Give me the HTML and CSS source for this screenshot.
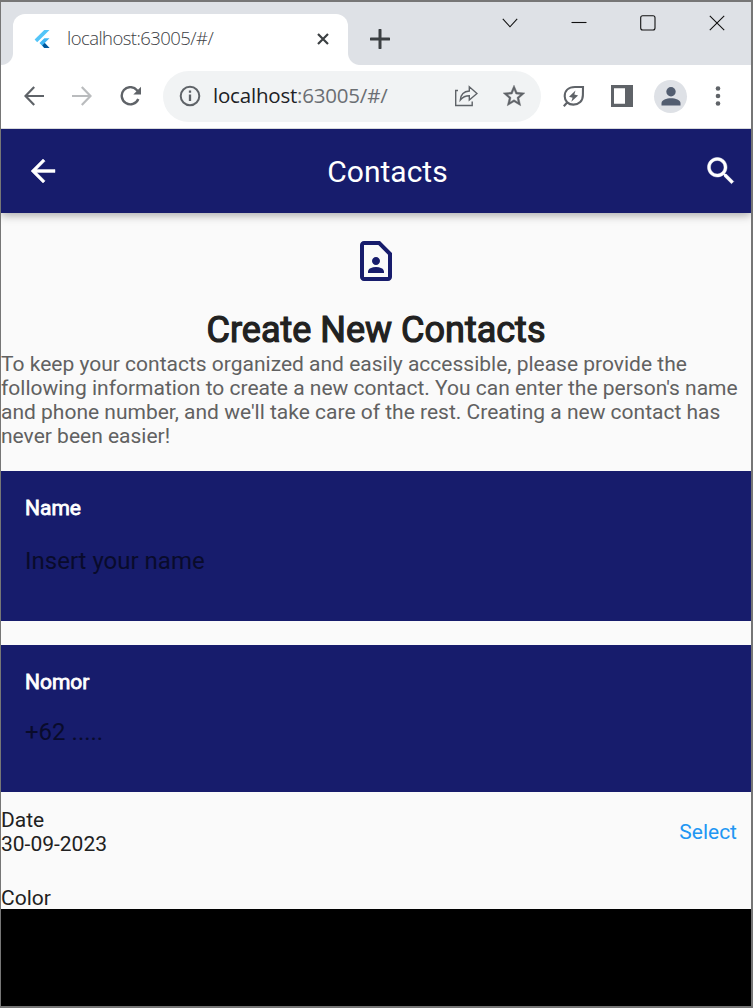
FILE: index.html
```html
<!DOCTYPE html>
<html lang="en">
<head>
<meta charset="utf-8">
<title>Contacts</title>
<link rel="stylesheet" href="styles.css">
</head>
<body>
<div class="window">
  <header class="tabstrip">
    <div class="tab">
      <svg class="favicon" width="24" height="24" viewBox="0 0 24 24"><path fill="#54c5f8" d="M14.300 3H19.500L7.200 15.200 4.600 12.600z"/><path fill="#40b6f3" d="M14.300 11.300H19.500L14.700 16l4.800 5h-5.200L9.500 16z"/><path fill="#01579b" d="M12.300 18.600l2.500-2.500 4.700 4.900h-5.200z"/></svg>
      <span class="tab-title">localhost:63005/#/</span>
      <svg class="tab-close" width="14" height="14" viewBox="0 0 14 14"><path d="M2 2l10 10M12 2L2 12" stroke="#3c4043" stroke-width="2.200" fill="none"/></svg>
    </div>
    <svg class="new-tab" width="20" height="20" viewBox="0 0 20 20"><path d="M10 1v18M1 10h18" stroke="#3c4043" stroke-width="3" stroke-linecap="round" fill="none"/></svg>
    <div class="controls">
      <svg width="16" height="16" viewBox="0 0 16 16"><path d="M.8 3.800L8 11.800l7.200-8"/></svg>
      <svg width="16" height="16" viewBox="0 0 16 16"><path d="M.5 7.500h15"/></svg>
      <svg width="16" height="16" viewBox="0 0 16 16"><rect x=".7" y=".7" width="14.300" height="14.300" rx="2"/></svg>
      <svg width="16" height="16" viewBox="0 0 16 16"><path d="M.8.8l14.400 14.400M15.200.8L.8 15.200"/></svg>
    </div>
  </header>
  <nav class="toolbar">
    <svg class="nav-icon" width="20" height="20" viewBox="0 0 20 20"><path d="M20 10H1.800M10.200 1L1.500 10l8.700 9" stroke="#5f6368" stroke-width="2.200" fill="none"/></svg>
    <svg class="nav-icon" width="20" height="20" viewBox="0 0 20 20"><path d="M0 10h18.200M9.800 1l8.700 9-8.700 9" stroke="#babcbe" stroke-width="2.200" fill="none"/></svg>
    <svg class="nav-icon" width="22" height="20" viewBox="0 0 22 20"><path d="M18.300 13A8.600 8.600 0 1 1 17 4.300L19 6.500" stroke="#5f6368" stroke-width="2.400" fill="none"/><path fill="#5f6368" d="M21 .8v7.700h-7.700z"/></svg>
    <div class="omnibox">
      <svg class="info" width="22" height="22" viewBox="0 0 22 22"><circle cx="11" cy="11" r="9.300" fill="none" stroke="#5f6368" stroke-width="2"/><path d="M11 9.500v6.500M11 5.500v2.300" stroke="#5f6368" stroke-width="2.300"/></svg>
      <span class="url"><b>localhost</b>:63005/#/</span>
      <svg class="share" width="24" height="22" viewBox="0 0 24 22"><path d="M4 5.500H1.700v15h16.500V16.500M6.300 15c.5-5.500 3.500-8.700 9-9V1.700L23 8.500l-7.700 6.600v-4.300c-4.300 0-6.500 1.200-9 4.200z" fill="none" stroke="#5f6368" stroke-width="1.400"/></svg>
      <svg class="star" width="26" height="26" viewBox="0 0 24 24"><path fill="#5f6368" stroke="#5f6368" stroke-width=".4" d="M22 9.240l-7.190-.62L12 2 9.190 8.630 2 9.240l5.460 4.730L5.820 21 12 17.270 18.180 21l-1.630-7.030L22 9.240zM12 15.400l-3.760 2.270 1-4.280-3.320-2.880 4.380-.38L12 6.100l1.710 4.040 4.380.38-3.320 2.880 1 4.280L12 15.400z"/></svg>
    </div>
    <svg class="leaf" width="22" height="22" viewBox="0 0 22 22"><path d="M20 2h-8C5 2 1.700 6 1.700 11.300c0 5.100 3.800 8.300 8.700 8.300 5.600 0 9.500-3.600 9.500-9.500zM4.800 16.700L.8 21.300" fill="none" stroke="#5f6368" stroke-width="2.100"/><path d="M12.500 5.500L6 11.700l3.600 1-1.300 4 6.800-6.300-3.800-1z" fill="#5f6368"/></svg>
    <svg class="panel" width="22" height="22" viewBox="0 0 22 22"><path fill="#5f6368" fill-rule="evenodd" d="M0 0h22v22H0zM3 3.300v15.400h11V3.300z"/></svg>
    <div class="avatar"><svg width="20" height="19" viewBox="0 0 20 19"><circle cx="10" cy="4.700" r="4.700" fill="#525d70"/><path fill="#525d70" d="M.5 18.600V16c0-3 5-4.800 9.500-4.800s9.500 1.800 9.500 4.800v2.600z"/></svg></div>
    <svg class="more" width="6" height="20" viewBox="0 0 6 20"><g fill="#5f6368"><circle cx="3" cy="2.500" r="2.300"/><circle cx="3" cy="10" r="2.300"/><circle cx="3" cy="17.500" r="2.300"/></g></svg>
  </nav>
  <div class="appbar">
    <svg width="36" height="36" viewBox="0 0 24 24"><path fill="#fff" stroke="#fff" stroke-width=".3" d="M20 11H7.830l5.590-5.590L12 4l-8 8 8 8 1.410-1.410L7.830 13H20v-2z"/></svg>
    <h1 class="appbar-title">Contacts</h1>
    <svg width="36" height="36" viewBox="0 0 24 24"><path fill="#fff" stroke="#fff" stroke-width=".3" d="M15.500 14h-.79l-.28-.27C15.410 12.590 16 11.110 16 9.500 16 5.910 13.090 3 9.500 3S3 5.910 3 9.500 5.910 16 9.500 16c1.610 0 3.090-.59 4.230-1.570l.27.28v.79l5 4.990L20.490 19l-4.990-5zm-6 0C7.010 14 5 11.990 5 9.500S7.010 5 9.500 5 14 7.010 14 9.500 11.990 14 9.500 14z"/></svg>
  </div>
  <main class="content">
    <svg class="contact-icon" width="48" height="48" viewBox="0 0 24 24"><path fill="#171c6c" d="M14 2H6c-1.100 0-2 .9-2 2v16c0 1.100.89 2 1.990 2H18c1.100 0 2-.9 2-2V8l-6-6zM13.170 4L18 8.830V20H6V4h7.170zM12 14c1.100 0 2-.9 2-2s-.9-2-2-2-2 .9-2 2 .9 2 2 2zm-4 3.430V18h8v-.57c0-.81-.48-1.530-1.220-1.850-.85-.37-1.790-.58-2.780-.58s-1.930.21-2.780.58C8.480 15.900 8 16.620 8 17.430z"/></svg>
    <h2 class="heading">Create New Contacts</h2>
    <p class="intro">To keep your contacts organized and easily accessible, please provide the<br>following information to create a new contact. You can enter the person's name<br>and phone number, and we'll take care of the rest. Creating a new contact has<br>never been easier!</p>
    <label class="field field-name"><span class="label">Name</span><span class="hint">Insert your name</span></label>
    <label class="field field-number"><span class="label">Nomor</span><span class="hint">+62 .....</span></label>
    <div class="date-row"><div>Date<br>30-09-2023</div><span class="select">Select</span></div>
    <div class="color">Color</div>
  </main>
</div>
</body>
</html>
```
FILE: styles.css
```css
* { box-sizing: border-box; }
body { margin: 0; }
svg { display: block; flex: none; }
.window {
  width: 753px; height: 1008px;
  border: solid #767676; border-width: 2px 2px 2px 1px;
  background: #000; overflow: hidden;
  font-family: Roboto, sans-serif;
}
.tabstrip { display: flex; height: 63px; background: #dee1e6; padding-left: 12px; }
.tab {
  position: relative; display: flex; align-items: center;
  width: 335px; height: 51px; margin-top: 12px; padding: 0 18px 2px 17px;
  background: #fff; border-radius: 12px 12px 0 0;
}
.tab::before, .tab::after { content: ""; position: absolute; bottom: 0; width: 12px; height: 12px; }
.tab::before { left: -12px; background: radial-gradient(circle at 0 0, #dee1e6 11.5px, #fff 12.5px); }
.tab::after { right: -12px; background: radial-gradient(circle at 100% 0, #dee1e6 11.5px, #fff 12.5px); }
.tab-title {
  margin: -2px 0 0 13px; flex: 1; white-space: nowrap;
  font: 350 18.500px "Open Sans", sans-serif; letter-spacing: -0.55px; color: #3c4043;
}
.new-tab { margin: 27px 0 0 22px; }
.controls { display: flex; gap: 53px; margin: 13px 0 0 112px; }
.controls svg { fill: none; stroke: #111; stroke-width: 1.1; }
.toolbar {
  position: relative; z-index: 1;
  display: flex; align-items: center; height: 64px; padding: 0 0 1px 23px;
  background: #fff; border-bottom: 1px solid #d7d9dc;
}
.nav-icon { margin: 0 28px 1px 0; }
.nav-icon:nth-child(3) { margin-right: 21px; }
.omnibox {
  display: flex; align-items: center; width: 378px; height: 51px;
  border-radius: 26px; background: #f1f3f4; padding-left: 16px;
}
.url {
  width: 241px; margin: -2px 0 0 12px; white-space: nowrap;
  font: 370 20.500px "Open Sans", sans-serif; letter-spacing: -0.2px; color: #6b6f73;
}
.url b { font-weight: 370; color: #202124; }
.star { margin-left: 23px; }
.leaf { margin: 0 0 1px 22px; }
.panel { margin: 0 0 1px 26px; }
.avatar {
  display: flex; align-items: center; justify-content: center;
  width: 33px; height: 33px; margin-left: 21px; border-radius: 50%; background: #dee1e6;
}
.more { margin: 0 0 1px 28px; }
.appbar {
  position: relative; display: flex; align-items: center; justify-content: space-between;
  height: 84px; padding: 0 12px 0 24px;
  background: #171c6c; box-shadow: 0 2px 9px rgba(0, 0, 0, .35);
}
.appbar-title { margin: 0; padding: 2px 0 0 11px; font-size: 30px; font-weight: 400; line-height: 36px; color: #fff; }
.content { height: 696px; background: #fafafa; padding-top: 24px; overflow: hidden; color: #212121; }
.contact-icon { margin: 0 auto; }
.heading {
  margin: 24px 0 0; text-align: center;
  font-size: 36px; font-weight: 400; line-height: 42px; -webkit-text-stroke: 1.2px #212121;
}
.intro { margin: 1px 0 0; font-size: 21px; line-height: 24px; color: #616161; white-space: nowrap; }
.field { display: flex; flex-direction: column; padding: 25px 24px 0; background: #171c6c; }
.field-name { height: 150px; margin-top: 23px; }
.field-number { height: 147px; margin-top: 24px; }
.label { font-size: 21px; line-height: 24px; color: #fff; -webkit-text-stroke: .8px #fff; }
.hint { margin-top: 26px; font-size: 24px; line-height: 30px; color: #090b2b; }
.field-number .hint { margin-top: 23px; }
.date-row {
  display: flex; justify-content: space-between; align-items: center;
  margin-top: 16px; padding-right: 14px; font-size: 21px; line-height: 24px;
}
.select { color: #2196f3; }
.color { margin-top: 30px; font-size: 21px; line-height: 24px; }
```
